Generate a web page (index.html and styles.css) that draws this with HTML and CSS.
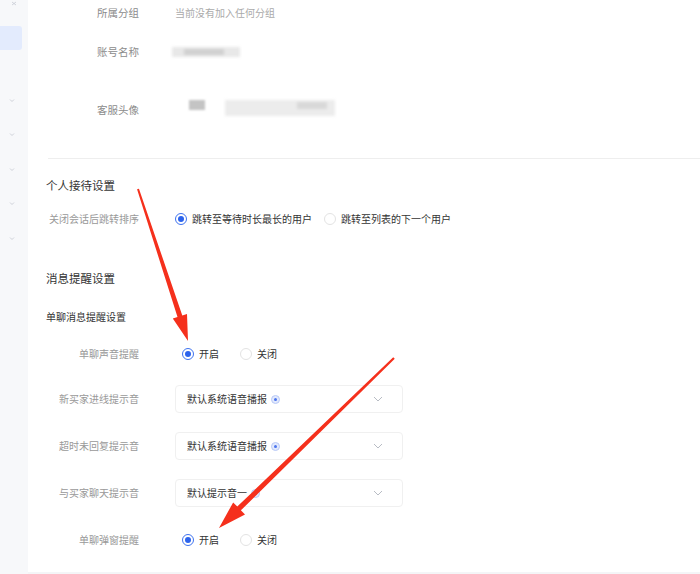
FILE: index.html
```html
<!DOCTYPE html>
<html lang="zh-CN">
<head>
<meta charset="utf-8">
<title>客服设置</title>
<link rel="stylesheet" href="styles.css">
</head>
<body>
<div class="page">
  <aside class="sidebar">
    <div class="side-top"><svg width="6" height="5" viewBox="0 0 6 5"><path d="M1 1 L5 4 M5 1 L1 4" stroke="#c8ccd4" stroke-width="0.8" fill="none"/></svg></div>
    <div class="side-active"></div>
    <ul class="side-list">
      <li><svg width="6" height="5" viewBox="0 0 6 5"><path d="M1 1.5 L3 3.5 L5 1.5" stroke="#c3c7cf" stroke-width="0.8" fill="none"/></svg></li>
      <li><svg width="6" height="5" viewBox="0 0 6 5"><path d="M1 1.5 L3 3.5 L5 1.5" stroke="#c3c7cf" stroke-width="0.8" fill="none"/></svg></li>
      <li><svg width="6" height="5" viewBox="0 0 6 5"><path d="M1 1.5 L3 3.5 L5 1.5" stroke="#c3c7cf" stroke-width="0.8" fill="none"/></svg></li>
      <li><svg width="6" height="5" viewBox="0 0 6 5"><path d="M1 1.5 L3 3.5 L5 1.5" stroke="#c3c7cf" stroke-width="0.8" fill="none"/></svg></li>
      <li><svg width="6" height="5" viewBox="0 0 6 5"><path d="M1 1.5 L3 3.5 L5 1.5" stroke="#c3c7cf" stroke-width="0.8" fill="none"/></svg></li>
    </ul>
  </aside>

  <main class="card">
    <div class="row row-group">
      <div class="label">所属分组</div>
      <div class="value muted">当前没有加入任何分组</div>
    </div>
    <div class="row row-name">
      <div class="label">账号名称</div>
      <div class="value"><span class="blur-name"><span class="blur-dark"></span></span></div>
    </div>
    <div class="row row-avatar">
      <div class="label">客服头像</div>
      <div class="value avatar-value">
        <span class="blur-avatar"></span>
        <span class="blur-bar"><span class="blur-bar-dark"></span></span>
      </div>
    </div>

    <div class="divider"></div>

    <h3 class="section-title first">个人接待设置</h3>
    <div class="row row-sort">
      <div class="label">关闭会话后跳转排序</div>
      <div class="value radios radios-wide">
        <label class="radio"><span class="dot on"></span>跳转至等待时长最长的用户</label>
        <label class="radio"><span class="dot"></span>跳转至列表的下一个用户</label>
      </div>
    </div>

    <h3 class="section-title second">消息提醒设置</h3>
    <h4 class="sub-title">单聊消息提醒设置</h4>

    <div class="row row-sound">
      <div class="label">单聊声音提醒</div>
      <div class="value radios radios-narrow">
        <label class="radio"><span class="dot on"></span>开启</label>
        <label class="radio"><span class="dot"></span>关闭</label>
      </div>
    </div>

    <div class="row row-select first-select">
      <div class="label">新买家进线提示音</div>
      <div class="value">
        <div class="select">
          <span class="select-text">默认系统语音播报</span>
          <span class="play"><span></span></span>
          <svg class="chev" width="10" height="6" viewBox="0 0 10 6"><path d="M1 1 L5 5 L9 1" stroke="#b8bcc4" stroke-width="1" fill="none"/></svg>
        </div>
      </div>
    </div>
    <div class="row row-select">
      <div class="label">超时未回复提示音</div>
      <div class="value">
        <div class="select">
          <span class="select-text">默认系统语音播报</span>
          <span class="play"><span></span></span>
          <svg class="chev" width="10" height="6" viewBox="0 0 10 6"><path d="M1 1 L5 5 L9 1" stroke="#b8bcc4" stroke-width="1" fill="none"/></svg>
        </div>
      </div>
    </div>
    <div class="row row-select">
      <div class="label">与买家聊天提示音</div>
      <div class="value">
        <div class="select">
          <span class="select-text">默认提示音一</span>
          <span class="play"><span></span></span>
          <svg class="chev" width="10" height="6" viewBox="0 0 10 6"><path d="M1 1 L5 5 L9 1" stroke="#b8bcc4" stroke-width="1" fill="none"/></svg>
        </div>
      </div>
    </div>

    <div class="row row-popup">
      <div class="label">单聊弹窗提醒</div>
      <div class="value radios radios-narrow">
        <label class="radio"><span class="dot on"></span>开启</label>
        <label class="radio"><span class="dot"></span>关闭</label>
      </div>
    </div>
  </main>

  <svg class="arrows" width="700" height="574" viewBox="0 0 700 574">
    <polygon fill="#f5301c" points="137.05,189.31 177.5,317.08 172.8,318.6 188,341 187.0,314.0 182.3,315.5 138.95,188.69"/>
    <polygon fill="#f5301c" points="393.23,357.21 237.27,506.62 233.16,502.39 219,528 245.0,514.57 240.89,510.34 394.77,358.79"/>
  </svg>
</div>
</body>
</html>
```

FILE: styles.css
```css
* { box-sizing: border-box; }

html, body {
  margin: 0;
  padding: 0;
  width: 700px;
  height: 574px;
  overflow: hidden;
  background: #f4f5f7;
  font-family: "Noto Sans CJK SC", "Noto Sans", sans-serif;
}

.page {
  position: relative;
  display: flex;
  width: 700px;
  height: 574px;
}

/* sidebar */
.sidebar {
  width: 28px;
  flex: none;
  background: #f7f8fa;
  display: flex;
  flex-direction: column;
}

.side-top {
  height: 8px;
  display: flex;
  justify-content: center;
  align-items: flex-start;
  padding-top: 1px;
}

.side-active {
  margin-top: 18px;
  width: 22px;
  height: 24px;
  background: #e3ebfd;
  border-radius: 0 3px 3px 0;
}

.side-list {
  list-style: none;
  margin: 33px 0 0 0;
  padding: 0;
}

.side-list li {
  height: 34.5px;
  display: flex;
  align-items: center;
  justify-content: center;
  padding-right: 4px;
}

/* main card */
.card {
  flex: 1;
  height: 572px;
  background: #ffffff;
  padding-left: 18px;
  display: flex;
  flex-direction: column;
}

.row {
  display: flex;
  align-items: center;
  flex: none;
}

.label {
  width: 93px;
  text-align: right;
  font-size: 10px;
  color: #999;
  white-space: nowrap;
  line-height: 14px;
}

.value {
  margin-left: 36px;
  font-size: 10px;
  color: #333;
  line-height: 14px;
  display: flex;
  align-items: center;
}

.muted { color: #aaa; }

.row-group { height: 26px; }
.row-group .label,
.row-name .label,
.row-avatar .label { color: #8c8c8c; font-size: 10.5px; }
.row-name { height: 26px; margin-top: 13px; }
.row-avatar { height: 40px; margin-top: 25px; }

.blur-name {
  margin-left: -3px;
  width: 68px;
  height: 10px;
  background: #e8e8e8;
  filter: blur(1.5px);
  display: flex;
  align-items: center;
  padding-left: 12px;
}
.blur-dark {
  display: block;
  width: 40px;
  height: 6px;
  background: #d0d0d0;
}

.avatar-value {
  align-items: flex-start;
  height: 40px;
  padding-top: 10px;
}
.blur-avatar {
  display: block;
  margin-left: 14px;
  width: 16px;
  height: 10px;
  background: #c4c4c4;
  filter: blur(1.2px);
}
.blur-bar {
  display: flex;
  align-items: flex-start;
  justify-content: flex-end;
  margin-left: 20px;
  width: 110px;
  height: 16px;
  background: #ececec;
  filter: blur(1.8px);
  padding: 2px 8px 0 0;
}
.blur-bar-dark {
  display: block;
  width: 30px;
  height: 7px;
  background: #d8d8d8;
}

.divider {
  margin-top: 28px;
  margin-left: 2px;
  height: 1px;
  background: #eeeeee;
  flex: none;
}

.section-title {
  margin: 0;
  height: 20px;
  line-height: 20px;
  font-size: 11.5px;
  font-weight: normal;
  color: #333;
  flex: none;
}
.section-title.first { margin-top: 16px; }
.section-title.second { margin-top: 39px; }

.sub-title {
  margin: 19px 0 0 0;
  height: 20px;
  line-height: 20px;
  font-size: 10px;
  font-weight: normal;
  color: #333;
  flex: none;
}

.row-sort { height: 20px; margin-top: 14px; }
.row-sound { height: 20px; margin-top: 17px; }
.row-popup { height: 20px; margin-top: 23px; }

.radios { gap: 12px; }
.radios-narrow { padding-left: 7px; gap: 21px; }

.radio {
  display: flex;
  align-items: center;
  color: #333;
  font-size: 10px;
  white-space: nowrap;
}

.dot {
  width: 12px;
  height: 12px;
  border-radius: 50%;
  border: 1px solid #e3e3e3;
  margin-right: 5px;
  display: flex;
  align-items: center;
  justify-content: center;
  background: #fff;
}
.dot.on { border-color: #3e72ef; }
.dot.on::after {
  content: "";
  width: 6px;
  height: 6px;
  border-radius: 50%;
  background: #2c63ec;
}

.row-select { height: 28px; margin-top: 19px; }
.row-select.first-select { margin-top: 21px; }

.select {
  width: 228px;
  height: 28px;
  border: 1px solid #f0f0f0;
  border-radius: 4px;
  display: flex;
  align-items: center;
  padding-left: 11px;
  padding-right: 19px;
  font-size: 10px;
  color: #333;
}

.select-text { white-space: nowrap; }

.play {
  margin-left: 4px;
  width: 9px;
  height: 9px;
  border-radius: 50%;
  background: #e2e9fc;
  border: 1px solid #b9c9f6;
  display: flex;
  align-items: center;
  justify-content: center;
}
.play span {
  width: 3px;
  height: 3px;
  border-radius: 50%;
  background: #4c75ee;
}

.chev { margin-left: auto; }

.arrows {
  position: absolute;
  left: 0;
  top: 0;
  pointer-events: none;
}
```
